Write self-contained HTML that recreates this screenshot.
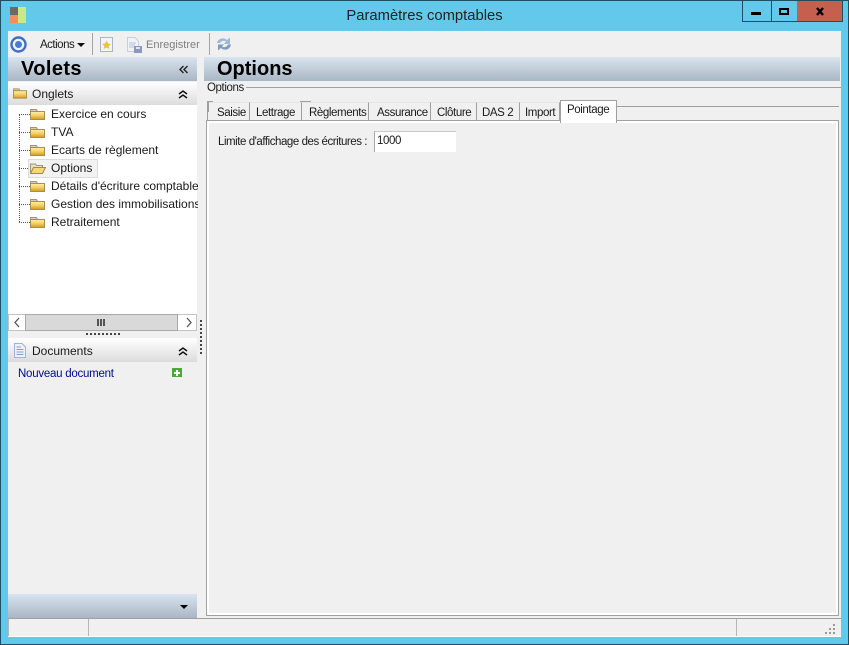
<!DOCTYPE html>
<html><head><meta charset="utf-8">
<style>
html,body{margin:0;padding:0}
body{width:849px;height:645px;overflow:hidden;position:relative;background:#63c9ea;font-family:"Liberation Sans",sans-serif;font-size:12px;color:#1a1a1a}
.a{position:absolute}
.t{position:absolute;white-space:nowrap;line-height:14px}
.g{background:linear-gradient(#d8e4ef,#a9b6c3)}
.h{background:linear-gradient(#fff,#dcdcdc)}
.tab{position:absolute;top:102px;height:18px;background:#f0f0f0;border:1px solid #a0a0a0;border-top-color:#e6e6e6;border-bottom:none;box-sizing:border-box;line-height:20px;font-size:11.5px;letter-spacing:-.4px;white-space:nowrap}
.fold{position:absolute;left:30px}
.dv{position:absolute;border-left:1px dotted #555}
.dh{position:absolute;border-top:1px dotted #555;left:19px;width:11px}
</style></head><body>
<svg width="0" height="0" style="position:absolute"><defs>
<linearGradient id="fg" x1="0" y1="0" x2="0" y2="1"><stop offset="0" stop-color="#fff0a8"/><stop offset=".5" stop-color="#f6d062"/><stop offset="1" stop-color="#cf9626"/></linearGradient>
<symbol id="f" viewBox="0 0 15 11"><path d="M.5 2.500 V.5 H6.500 L7.500 2.500Z" fill="#d8cfae" stroke="#a29674"/><rect x=".5" y="2.500" width="14" height="8" fill="url(#fg)" stroke="#a8904c"/></symbol>
</defs></svg>
<div class="a" style="left:0;top:0;width:847px;height:643px;border:1px solid #1f4f63"></div>
<div class="a" style="left:10px;top:7px;width:10px;height:8px;background:#6a6a6a"></div>
<div class="a" style="left:10px;top:15px;width:8px;height:8px;background:#f0905a"></div>
<div class="a" style="left:18px;top:7px;width:8px;height:16px;background:#c6e98a"></div>
<div class="t" style="left:0;top:8px;width:849px;text-align:center;font-size:14.8px;line-height:16px;color:#222">Paramètres comptables</div>

<div class="a" style="left:742px;top:0;width:28px;height:20px;border:1px solid #1f4f63"></div>
<div class="a" style="left:751px;top:12px;width:10px;height:3px;background:#000"></div>
<div class="a" style="left:771px;top:0;width:26px;height:20px;border:1px solid #1f4f63;border-left:none"></div>
<div class="a" style="left:779px;top:8px;width:6px;height:3px;border:2px solid #000;border-top-width:2px"></div>
<div class="a" style="left:797px;top:1px;width:45px;height:20px;background:#c75f50;border-bottom:1px solid #1f4f63;border-right:1px solid #1f4f63"></div>
<svg class="a" style="left:814px;top:6px" width="12" height="11"><path d="M3 2 L9 9 M9 2 L3 9" stroke="#000" stroke-width="2.4"/></svg>

<div class="a" style="left:8px;top:31px;width:833px;height:606px;background:#f0f0f0"></div>

<svg class="a" style="left:10px;top:36px" width="18" height="18"><circle cx="8.500" cy="8.500" r="7" fill="#eef3fb" stroke="#3f6fc4" stroke-width="2.400"/><circle cx="8.500" cy="8.500" r="3.500" fill="#4a7bcf"/></svg>
<div class="t" style="left:40px;top:38px;font-size:11.5px;letter-spacing:-.5px">Actions</div>
<div class="a" style="left:77px;top:43px;border:4px solid transparent;border-top:4px solid #111;border-bottom:none"></div>
<div class="a" style="left:92px;top:33px;width:1px;height:22px;background:#a5a5a5"></div>
<svg class="a" style="left:99px;top:36px" width="16" height="17"><rect x="1.500" y="1.500" width="12" height="14" fill="#f3f4f8" stroke="#a9b3c9"/><path d="M7.500 4.500 L9 7.500 L12 8 L9.700 10 L10.300 13 L7.500 11.500 L4.700 13 L5.300 10 L3 8 L6 7.500Z" fill="#e8c440"/></svg>
<svg class="a" style="left:126px;top:36px" width="18" height="18"><path d="M1.500 1.500 H9 L12.500 5 V15.500 H1.500Z" fill="#f0f2f6" stroke="#c8cfdb"/><path d="M3 7H10M3 9H9M3 11H8" stroke="#b7c2d4"/><rect x="8" y="10" width="8" height="7" fill="#8c98c0"/><rect x="10" y="11" width="4" height="2" fill="#dfe3ee"/></svg>
<div class="t" style="left:146px;top:38px;color:#7e7e7e;font-size:11px">Enregistrer</div>
<div class="a" style="left:209px;top:33px;width:1px;height:22px;background:#a5a5a5"></div>
<svg class="a" style="left:215px;top:35px" width="18" height="18"><path d="M2 8 C3 3 9 2 12 5 L15 2.500 V9 H9 L11 6.500 C9 5 6 6 5 8Z" fill="#9fb8d4"/><path d="M16 9.500 C15 15 9 16 6 13 L3 15.500 V9.500 H9 L7 11.500 C9 13 12 12 13 9.500Z" fill="#7f9dc0"/></svg>

<div class="a g" style="left:8px;top:57px;width:189px;height:24px"></div>
<div class="t" style="left:21px;top:58px;font-size:20px;line-height:23px;font-weight:bold;letter-spacing:.4px;color:#000">Volets</div>
<svg class="a" style="left:179px;top:65px" width="10" height="9"><path d="M4.500 1 L1 4.500 L4.500 8 M8.500 1 L5 4.500 L8.500 8" fill="none" stroke="#222" stroke-width="1.400"/></svg>
<div class="a g" style="left:204px;top:57px;width:636px;height:24px"></div>
<div class="t" style="left:217px;top:58px;font-size:20px;line-height:23px;font-weight:bold;color:#000">Options</div>

<div class="a h" style="left:8px;top:82px;width:189px;height:23px"></div>
<svg class="fold" style="left:13px;top:87px" width="14" height="13"><use href="#f" width="14" height="13"/></svg>
<div class="t" style="left:32px;top:87px">Onglets</div>
<svg class="a" style="left:178px;top:90px" width="10" height="9"><path d="M1 4 L5 1 L9 4 M1 8 L5 5 L9 8" fill="none" stroke="#111" stroke-width="1.500"/></svg>
<div class="a" style="left:8px;top:105px;width:189px;height:226px;background:#fff"></div>

<div class="dv" style="left:19px;top:114px;height:108px"></div>
<div class="dh" style="top:114px"></div>
<div class="dh" style="top:132px"></div>
<div class="dh" style="top:150px"></div>
<div class="dh" style="top:168px"></div>
<div class="dh" style="top:186px"></div>
<div class="dh" style="top:204px"></div>
<div class="dh" style="top:222px"></div>
<div class="a" style="left:28px;top:159px;width:68px;height:17px;background:#f2f2f2;border:1px solid #dcdcdc"></div>
<svg class="fold" style="top:109px" width="15" height="11"><use href="#f"/></svg>
<svg class="fold" style="top:127px" width="15" height="11"><use href="#f"/></svg>
<svg class="fold" style="top:145px" width="15" height="11"><use href="#f"/></svg>
<svg class="fold" style="top:163px" width="16" height="11"><path d="M.5 10 V1 H5.500 L6.500 2.500 H12.500 V4.500" fill="#e8dfc0" stroke="#a29674"/><path d="M.5 10.500 L3.500 4.500 H15.500 L12.500 10.500Z" fill="#f6d67a" stroke="#a08a4c"/></svg>
<svg class="fold" style="top:181px" width="15" height="11"><use href="#f"/></svg>
<svg class="fold" style="top:199px" width="15" height="11"><use href="#f"/></svg>
<svg class="fold" style="top:217px" width="15" height="11"><use href="#f"/></svg>
<div class="t" style="left:51px;top:107px">Exercice en cours</div>
<div class="t" style="left:51px;top:125px">TVA</div>
<div class="t" style="left:51px;top:143px">Ecarts de règlement</div>
<div class="t" style="left:51px;top:161px">Options</div>
<div class="t" style="left:51px;top:179px;width:147px;overflow:hidden">Détails d'écriture comptable</div>
<div class="t" style="left:51px;top:197px;width:147px;overflow:hidden">Gestion des immobilisations</div>
<div class="t" style="left:51px;top:215px">Retraitement</div>

<div class="a" style="left:8px;top:314px;width:189px;height:17px;background:#fff;border:1px solid #c4c4c4;box-sizing:border-box"></div>
<div class="a" style="left:25px;top:314px;width:153px;height:17px;background:#d9d9d9;border:1px solid #a8a8a8;box-sizing:border-box"></div>
<div class="a" style="left:97px;top:319px;width:2px;height:7px;background:#555;box-shadow:3px 0 #555,6px 0 #555"></div>
<svg class="a" style="left:13px;top:317px" width="8" height="11"><path d="M6 1 L2 5.500 L6 10" fill="none" stroke="#555" stroke-width="1.300"/></svg>
<svg class="a" style="left:185px;top:317px" width="8" height="11"><path d="M2 1 L6 5.500 L2 10" fill="none" stroke="#555" stroke-width="1.300"/></svg>
<div class="a" style="left:86px;top:333px;width:34px;height:2px;background:repeating-linear-gradient(90deg,#444 0 2px,transparent 2px 4px)"></div>
<div class="a" style="left:200px;top:320px;width:2px;height:34px;background:repeating-linear-gradient(#444 0 2px,transparent 2px 4px)"></div>

<div class="a h" style="left:8px;top:338px;width:189px;height:24px"></div>
<svg class="a" style="left:13px;top:342px" width="14" height="17"><path d="M1.500 1.500 H9 L12.500 5 V15.500 H1.500Z" fill="#eef2fb" stroke="#9db2d8"/><path d="M3.500 5H8M3.500 7.500H10.500M3.500 10H10.500M3.500 12.500H10.500" stroke="#7f9bd0"/></svg>
<div class="t" style="left:32px;top:344px">Documents</div>
<svg class="a" style="left:178px;top:347px" width="10" height="9"><path d="M1 4 L5 1 L9 4 M1 8 L5 5 L9 8" fill="none" stroke="#111" stroke-width="1.500"/></svg>
<div class="t" style="left:18px;top:367px;color:#000a8c;font-size:11.5px;letter-spacing:-.25px">Nouveau document</div>
<div class="a" style="left:172px;top:368px;width:10px;height:9px;background:#4fa63c"></div>
<div class="a" style="left:174px;top:372px;width:6px;height:2px;background:#fff"></div>
<div class="a" style="left:176px;top:370px;width:2px;height:6px;background:#fff"></div>

<div class="a g" style="left:8px;top:594px;width:189px;height:24px"></div>
<div class="a" style="left:180px;top:605px;border:4px solid transparent;border-top:4px solid #000;border-bottom:none"></div>

<div class="a" style="left:246px;top:87px;width:595px;height:1px;background:#a0a0a0"></div>
<div class="t" style="left:207px;top:81px;font-size:11.5px;letter-spacing:-.4px">Options</div>
<div class="a" style="left:617px;top:106px;width:222px;height:1px;background:#a0a0a0"></div>
<div class="a" style="left:206px;top:120px;width:633px;height:496px;background:#fff;border:1px solid #a0a0a0;box-sizing:border-box"></div>
<div class="a" style="left:209px;top:123px;width:627px;height:490px;background:#f0f0f0"></div>
<div class="tab" style="left:207px;width:43px;padding-left:9px">Saisie</div>
<div class="tab" style="left:249px;width:53px;padding-left:6px">Lettrage</div>
<div class="tab" style="left:301px;width:68px;padding-left:7px">Règlements</div>
<div class="tab" style="left:368px;width:63px;padding-left:8px">Assurance</div>
<div class="tab" style="left:430px;width:47px;padding-left:6px">Clôture</div>
<div class="tab" style="left:476px;width:44px;padding-left:5px">DAS 2</div>
<div class="tab" style="left:519px;width:41px;padding-left:5px">Import</div>
<div class="a" style="left:207px;top:101px;width:6px;height:1px;background:#a0a0a0"></div>
<div class="a" style="left:207px;top:101px;width:2px;height:11px;background:#a0a0a0"></div>
<div class="a" style="left:300px;top:101px;width:11px;height:1px;background:#a0a0a0"></div>
<div class="a" style="left:560px;top:100px;width:57px;height:23px;background:#fff;border:1px solid #a0a0a0;border-bottom:none;box-sizing:border-box;padding-left:6px;line-height:19px;font-size:11.5px;letter-spacing:-.4px">Pointage</div>

<div class="t" style="left:218px;top:135px;font-size:11.5px;letter-spacing:-.45px">Limite d'affichage des écritures :</div>
<div class="a" style="left:374px;top:131px;width:82px;height:21px;background:#fff;border-left:1px solid #a8a8a8;border-top:1px solid #c8c8c8;box-sizing:border-box;padding:2px 2px;font-size:11.5px;line-height:14px;letter-spacing:-.4px">1000</div>

<div class="a" style="left:8px;top:618px;width:833px;height:1px;background:#a0a0a0"></div>
<div class="a" style="left:8px;top:619px;width:1px;height:17px;background:#b5b5b5"></div>
<div class="a" style="left:88px;top:619px;width:1px;height:17px;background:#b5b5b5"></div>
<div class="a" style="left:736px;top:619px;width:1px;height:17px;background:#b5b5b5"></div>
<div class="a" style="left:8px;top:636px;width:833px;height:1px;background:#fff"></div>
<svg class="a" style="left:825px;top:624px" width="12" height="12" fill="#9a9a9a"><rect x="8" y="0" width="2" height="2"/><rect x="4" y="4" width="2" height="2"/><rect x="8" y="4" width="2" height="2"/><rect x="0" y="8" width="2" height="2"/><rect x="4" y="8" width="2" height="2"/><rect x="8" y="8" width="2" height="2"/></svg>
</body></html>
